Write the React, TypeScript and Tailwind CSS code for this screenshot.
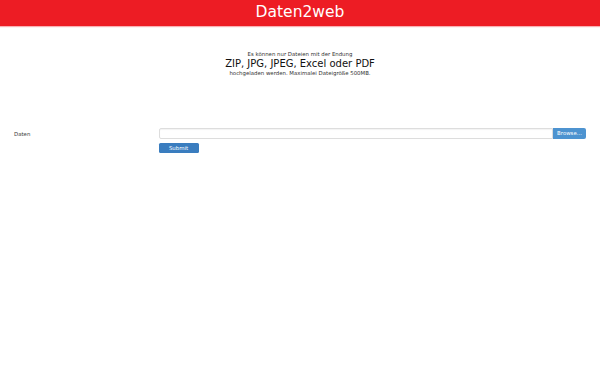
const App = () => {
  return (
    <div className="min-h-[375px] bg-white font-['DejaVu_Sans',sans-serif] text-[#333]">
      <header className="flex h-[26px] items-center justify-center bg-[#ed1c24] shadow-[0_1px_1px_rgba(237,28,36,0.35)]">
        <h1 className="text-[15.5px] leading-none text-white">Daten2web</h1>
      </header>

      <section className="mt-[25px] flex flex-col items-center text-center">
        <p className="text-[5.4px] leading-[7px]">Es können nur Dateien mit der Endung</p>
        <p className="text-[10px] leading-[12px] text-[#111]">ZIP, JPG, JPEG, Excel oder PDF</p>
        <p className="text-[5.4px] leading-[7px]">hochgeladen werden. Maximalei Dateigröße 500MB.</p>
      </section>

      <form className="mt-[51px] flex px-[14px]">
        <label className="w-[145px] pt-[2px] text-[5.4px] font-medium text-[#3a3a3a]">Daten</label>
        <div className="flex w-[429px] flex-col items-start">
          <div className="flex h-[11px] w-full">
            <input
              type="text"
              readOnly
              className="h-full flex-1 rounded-l-[2px] border border-[#ddd] bg-white text-[5px] shadow-[inset_0_1px_1px_rgba(0,0,0,0.05)] outline-none"
            />
            <button
              type="button"
              className="flex h-full w-[33px] items-center justify-center rounded-r-[2px] bg-[#4d93d0] text-[5.4px] text-white"
            >
              Browse...
            </button>
          </div>
          <button
            type="button"
            className="mt-[4px] flex h-[10px] w-[40px] items-center justify-center rounded-[1.5px] bg-[#3a7dbf] text-[5.4px] text-white"
          >
            Submit
          </button>
        </div>
      </form>
    </div>
  );
};

export default App;
